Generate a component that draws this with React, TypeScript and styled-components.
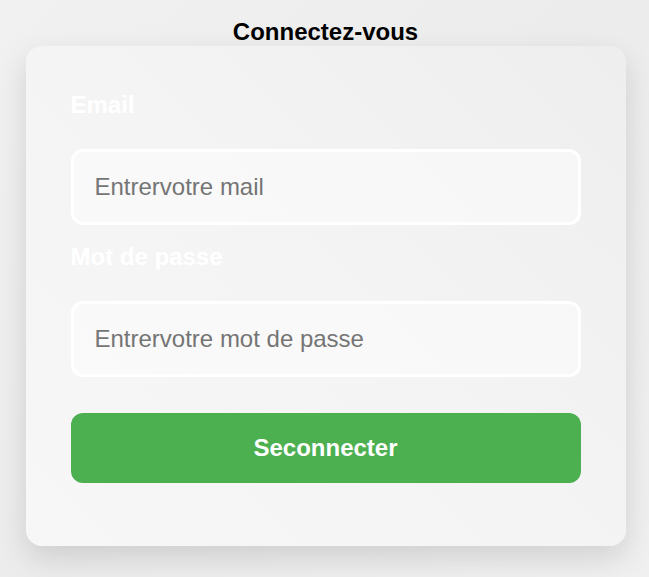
import React from "react";
import styled, { createGlobalStyle } from "styled-components";

const Global = createGlobalStyle`
  html, body { margin: 0; padding: 0; }
  body {
    min-height: 577px;
    background: linear-gradient(135deg, #f1f1f1 0%, #ececec 50%, #f0f0f0 100%);
    font-family: "Liberation Sans", Arial, sans-serif;
  }
`;

const Page = styled.div`
  display: flex;
  flex-direction: column;
  align-items: center;
  padding: 19px 0 0 2px;
  min-height: 577px;
  box-sizing: border-box;
`;

const Title = styled.h2`
  margin: 0 0 2px;
  font-size: 24px;
  line-height: 25px;
  font-weight: 700;
  color: #000;
`;

const Card = styled.form`
  width: 600px;
  box-sizing: border-box;
  padding: 45px 45px 63px;
  border-radius: 16px;
  background: linear-gradient(225deg, #eeeeee 0%, #f4f4f4 50%, #f7f7f7 100%);
  box-shadow: 0 12px 30px rgba(0, 0, 0, 0.13);
  display: flex;
  flex-direction: column;
`;

const Label = styled.label`
  display: block;
  font-size: 24px;
  line-height: 28px;
  font-weight: 700;
  color: #ffffff;
  margin-bottom: 30px;
`;

const Input = styled.input<{ $gap: number }>`
  display: block;
  width: 100%;
  height: 76px;
  box-sizing: border-box;
  padding: 0 21px;
  border: 3px solid #ffffff;
  border-radius: 12px;
  background: rgba(255, 255, 255, 0.45);
  font-family: "Liberation Sans", Arial, sans-serif;
  font-size: 24px;
  color: #333;
  outline: none;
  margin-bottom: ${(p) => p.$gap}px;
  &::placeholder { color: #757575; opacity: 1; }
`;

const Button = styled.button`
  display: flex;
  align-items: center;
  justify-content: center;
  width: 100%;
  height: 70px;
  border: none;
  border-radius: 12px;
  background: #4caf50;
  color: #ffffff;
  font-family: "Liberation Sans", Arial, sans-serif;
  font-size: 24px;
  font-weight: 700;
  cursor: pointer;
`;

export default function App() {
  return (
    <>
      <Global />
      <Page>
        <Title>Connectez-vous</Title>
        <Card onSubmit={(e) => e.preventDefault()}>
          <Label htmlFor="email">Email</Label>
          <Input id="email" type="email" placeholder="Entrervotre mail" $gap={18} />
          <Label htmlFor="pwd">Mot de passe</Label>
          <Input id="pwd" type="password" placeholder="Entrervotre mot de passe" $gap={36} />
          <Button type="submit">Seconnecter</Button>
        </Card>
      </Page>
    </>
  );
}
